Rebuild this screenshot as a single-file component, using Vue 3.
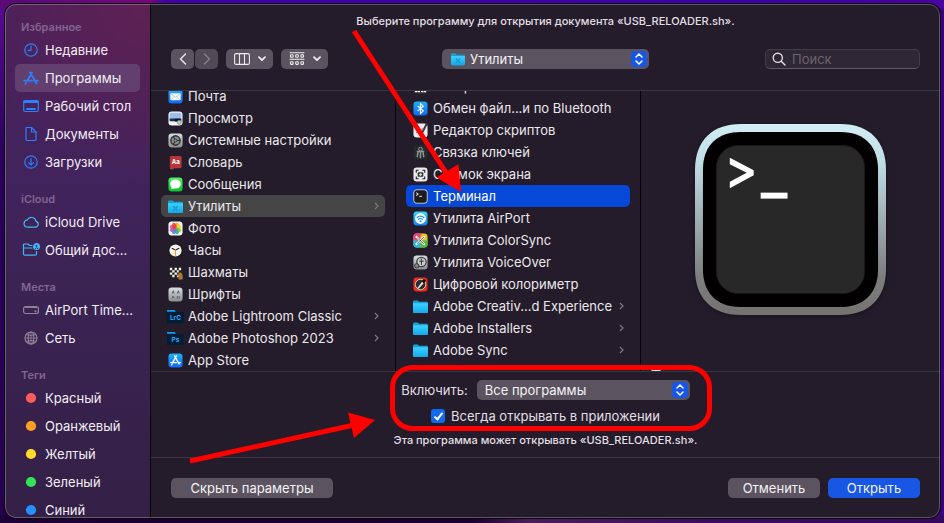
<script setup>
import { ref } from 'vue'

const sections = [
  {
    title: 'Избранное',
    items: [
      { name: 'Недавние', icon: 'clock', tone: 'blue' },
      { name: 'Программы', icon: 'apps', tone: 'blue', active: true },
      { name: 'Рабочий стол', icon: 'desktop', tone: 'blue' },
      { name: 'Документы', icon: 'doc', tone: 'blue' },
      { name: 'Загрузки', icon: 'download', tone: 'blue' },
    ],
  },
  {
    title: 'iCloud',
    items: [
      { name: 'iCloud Drive', icon: 'cloud', tone: 'cyan' },
      { name: 'Общий дос...', icon: 'shared', tone: 'cyan' },
    ],
  },
  {
    title: 'Места',
    items: [
      { name: 'AirPort Time...', icon: 'disk', tone: 'gray' },
      { name: 'Сеть', icon: 'globe', tone: 'gray' },
    ],
  },
  {
    title: 'Теги',
    items: [
      { name: 'Красный', icon: 'dot', tone: 'tag-red' },
      { name: 'Оранжевый', icon: 'dot', tone: 'tag-orange' },
      { name: 'Желтый', icon: 'dot', tone: 'tag-yellow' },
      { name: 'Зеленый', icon: 'dot', tone: 'tag-green' },
      { name: 'Синий', icon: 'dot', tone: 'tag-blue' },
    ],
  },
]

const applications = [
  { name: 'Почта', icon: 'mail' },
  { name: 'Просмотр', icon: 'preview' },
  { name: 'Системные настройки', icon: 'settings' },
  { name: 'Словарь', icon: 'dictionary' },
  { name: 'Сообщения', icon: 'messages' },
  { name: 'Утилиты', icon: 'utilities', folder: true, state: 'open' },
  { name: 'Фото', icon: 'photos' },
  { name: 'Часы', icon: 'clockApp' },
  { name: 'Шахматы', icon: 'chess' },
  { name: 'Шрифты', icon: 'fonts' },
  { name: 'Adobe Lightroom Classic', icon: 'lightroom', folder: true },
  { name: 'Adobe Photoshop 2023', icon: 'photoshop', folder: true },
  { name: 'App Store', icon: 'appStore' },
]

const utilities = [
  { name: 'Настройка Audio-MIDI', icon: 'midi' },
  { name: 'Обмен файл...и по Bluetooth', icon: 'bluetooth' },
  { name: 'Редактор скриптов', icon: 'script' },
  { name: 'Связка ключей', icon: 'keychain' },
  { name: 'Снимок экрана', icon: 'screenshot' },
  { name: 'Терминал', icon: 'terminal', state: 'selected' },
  { name: 'Утилита AirPort', icon: 'airport' },
  { name: 'Утилита ColorSync', icon: 'colorsync' },
  { name: 'Утилита VoiceOver', icon: 'voiceover' },
  { name: 'Цифровой колориметр', icon: 'colorimeter' },
  { name: 'Adobe Creativ...d Experience', icon: 'folder', folder: true },
  { name: 'Adobe Installers', icon: 'folder', folder: true },
  { name: 'Adobe Sync', icon: 'folder', folder: true },
]

const columns = [
  { id: 'applications', label: 'Программы', rows: applications },
  { id: 'utilities', label: 'Утилиты', rows: utilities },
]

const tile = (fill) => `<rect x=".5" y=".5" width="15" height="15" rx="3.500" fill="${fill}"/>`
const folderShape =
  '<path d="M0 3Q0 1.500 1.500 1.500H5L6.500 3H14.500Q16 3 16 4.500V13.500Q16 15 14.500 15H1.500Q0 15 0 13.500Z" fill="#1a9fd0"/><path d="M0 4.500H16V13.500Q16 15 14.500 15H1.500Q0 15 0 13.500Z" fill="url(#g-folder)"/>'
const adobeFolder =
  '<path d="M-1 1H7L8.500 3H-1Z" fill="#0aa0f5"/><path d="M-1 3.500H16.500V15H-1Z" fill="#001d36"/>'
const petals = ['#f7a51c', '#f4d80a', '#8fce3a', '#35b37b', '#4a8fe0', '#9a5fd0', '#d9499a', '#ee3f35']
  .map((c, i) => `<ellipse cx="8" cy="4.900" rx="2.200" ry="3.300" fill="${c}" opacity=".9" transform="rotate(${i * 45 + 22} 8 8)"/>`)
  .join('')

const art = {
  clock: '<circle cx="8" cy="8" r="6.200"/><path d="M8 4V8.300H4.800"/>',
  apps: '<path d="M9 2.500 4 11M7 2.500l6.500 11M1.200 10.700H9M11 10.700h3.800M3 12.800l-.7 1.200" stroke-width="1.700"/>',
  desktop: '<rect x=".7" y="2.500" width="14.600" height="11" rx="1.500"/><path d="M1 4.300H15M1 3.200H15" stroke-width="1.200"/><path d="M4 11H12" stroke-width="1.800"/>',
  doc: '<path d="M3.500 1.500H8.500L13 6V13.200Q13 14.500 11.700 14.500H4.300Q3 14.500 3 13.200V2Z"/><path d="M8.500 1.500V6H13"/>',
  download: '<circle cx="8" cy="8" r="6.200"/><path d="M8 4.700V11M5.500 8.700 8 11.200l2.500-2.500"/>',
  cloud: '<path d="M4 13.200H12.300A3 3 0 0 0 13 7.300A4.600 4.600 0 0 0 4.400 5.900A3.700 3.700 0 0 0 4 13.200Z"/>',
  shared: '<path d="M9 3.500H6.500L5 2H1.500Q.5 2 .5 3V12Q.5 13.200 1.700 13.200H12.300Q13.500 13.200 13.500 12V9.500M.5 6H9"/><circle cx="13.500" cy="4.600" r="2.900" fill="currentColor"/><circle cx="13.500" cy="3.900" r=".9" fill="#40234f" stroke="none"/><path d="M12.200 6.500Q13.500 4.700 14.800 6.500" stroke="#40234f" stroke-width=".9"/>',
  disk: '<rect x=".6" y="4.500" width="14.800" height="7" rx="2"/><path d="M2 5.500H14" /><circle cx="12.500" cy="9.300" r=".5"/>',
  globe: '<circle cx="8" cy="8" r="6"/><ellipse cx="8" cy="8" rx="2.800" ry="6"/><path d="M2 8H14M8 2V14M3.300 4.700Q8 6.500 12.700 4.700M3.300 11.300Q8 9.500 12.700 11.300" stroke-width=".9"/>',
  dot: '<circle cx="8" cy="8" r="5.100" fill="currentColor" stroke="none"/>',

  folder: folderShape,
  utilities: folderShape + '<path d="M5.500 7.500l5 5M10.500 7.500l-5 5" stroke="#1b98cf" stroke-width="1.500"/>',
  mail: tile('url(#g-blue)') + '<rect x="2.500" y="4.500" width="11" height="7.500" rx="1" fill="#f4f8fb"/><path d="M3 5l5 4 5-4M3 11.700l3.500-3.500M13 11.700 9.500 8.200" stroke="#a9bccb" fill="none" stroke-width=".8"/>',
  preview: tile('#f4f4f6') + '<rect x="1.800" y="1.800" width="12.400" height="9" rx="1.500" fill="#9cc0ec"/><path d="M1.800 8H14.200V11H1.800Z" fill="#22314e"/><rect x="7" y="8.200" width="6.500" height="3" rx="1" fill="#111"/><circle cx="12" cy="12" r="2.200" fill="#c3c9d3" stroke="#778" stroke-width=".7"/>',
  settings: tile('url(#g-silver)') + '<circle cx="8" cy="8" r="4.900" fill="#8f9193" stroke="#3a3b3d" stroke-width="1.700"/><path d="M8.500 8H13M8 8 5.700 4M8 8l-2.300 4" stroke="#2b2c2e" stroke-width="1.100"/><circle cx="8" cy="8" r="1.600" fill="#9a9c9e" stroke="#2b2c2e"/>',
  dictionary: '<path d="M2 2.500Q2 1 3.500 1H13Q14.500 1 14.500 2.500V12.500Q14.500 14 13 14H3.500Q2 14 2 12.500Z" fill="#b9353a"/><path d="M2 13Q3 14.500 6 14.200V15.200H3Q2 15 2 13Z" fill="#e0453f"/><text x="8.300" y="9.800" font-size="6.500" font-weight="700" text-anchor="middle" fill="#fff">Aa</text>',
  messages: tile('url(#g-green)') + '<ellipse cx="8" cy="7.500" rx="5.700" ry="4.800" fill="#fff"/><path d="M4 10 3.500 13 7 12Z" fill="#fff"/>',
  photos: tile('#fafafa') + petals,
  clockApp: tile('#1c1c1e') + '<circle cx="8" cy="8" r="6.500" fill="#f6f6f4"/><path d="M8 7.500 4 5.500M8 7.500l4-2" stroke="#222" stroke-width="1.200"/><path d="M8 6.500V13.500" stroke="#f29a1f" stroke-width="1.200"/>',
  chess: tile('#222') + '<path d="M2 3h2.500v2.500H2zM7 3h2.500v2.500H7zM11.500 3H14v2.500h-2.500zM4.500 5.500H7V8H4.500zM9.500 5.500h2V8h-2zM2 8h2.500v2.500H2zM7 8h2.500v2.500H7zM4.500 10.500H7V13H4.500zM9.500 10.500h2V13h-2z" fill="#eee"/><path d="M11 15.500q.8-2 .3-3.500-2 .3-1.500-1 1-3.500 4-3 2.500 1.500 1.700 7.500Z" fill="#ae7633"/>',
  fonts: tile('url(#g-silver)') + '<path d="M4.500 7l1-3 1 3M10 7l1-3 1 3M4.500 12l1-2.500 1 2.500M10 9.500v3M12 9.500v3" stroke="#555d63" fill="none" stroke-width="1"/>',
  lightroom: adobeFolder + '<text x="8" y="11.500" font-size="7" font-weight="700" text-anchor="middle" fill="#31a8ff">LrC</text>',
  photoshop: adobeFolder + '<text x="8" y="11.500" font-size="7" font-weight="700" text-anchor="middle" fill="#31a8ff">Ps</text>',
  appStore: tile('url(#g-blue)') + '<path d="M9 3 4.800 10.500M7 3l4.800 8.700M3 10.300H9M11 10.300h2.200M4.300 12l-.4.700" stroke="#fff" stroke-width="1.400" stroke-linecap="round"/>',

  midi: tile('#333') + '<path d="M2 9h2.500v5H2zM5 9h2.500v5H5zM8.500 9H11v5H8.500zM11.500 9H14v5h-2.500z" fill="#fff"/>',
  bluetooth: tile('url(#g-blue)') + '<path d="M5 5.300l6 5.200-3 2.700V2.800l3 2.700-6 5.200" stroke="#fff" fill="none" stroke-width="1.200"/>',
  script: tile('#ececee') + '<path d="M3 10.500q2-2 3 0t4-5" stroke="#888" fill="none"/><path d="M14.500 1 8 14" stroke="#3b3f46" stroke-width="2.200"/>',
  keychain: tile('#26282a') + '<circle cx="8" cy="4.500" r="2" fill="none" stroke="#9aa"/><path d="M5.500 6.500 4.500 13M8 6v8M10.500 6.500l1 6.500M4 7h8" stroke="#8b9692" stroke-width="1.600"/>',
  screenshot: tile('#ebebed') + '<path d="M3.500 6V3.500H6M10 3.500h2.500V6M12.500 10v2.500H10M6 12.500H3.500V10" stroke="#222" fill="none" stroke-width="1.200"/><rect x="5" y="5.700" width="6" height="4.800" rx="1" fill="#333"/><circle cx="8" cy="8.100" r="1.400" fill="#ddd"/>',
  terminal: '<rect x=".8" y=".8" width="14.400" height="14.400" rx="3.500" fill="#1c1c1c" stroke="#b9c3c8" stroke-width="1.100"/><path d="M3.300 4l2.400 1.500L3.300 7" stroke="#fff" fill="none"/><path d="M6.700 7.800H9.500" stroke="#fff"/>',
  airport: tile('url(#g-cyan)') + '<circle cx="8" cy="8" r="5.800" fill="#f5fbff"/><path d="M4 7.200q4-3.400 8 0M5.500 9q2.500-2 5 0" stroke="#1793ed" fill="none" stroke-width="1.200"/><circle cx="8" cy="10.800" r="1" fill="#1793ed"/>',
  colorsync: tile('#e9c52c') + '<path d="M.5 4Q.5.500 4 .5H8V8H.5Z" fill="#e5409a"/><path d="M.5 8H8V15.500H4Q.5 15.500.5 12Z" fill="#24b6e8"/><path d="M8 15.500V8h7.500v4q0 3.500-3.500 3.500Z" fill="#51b948"/><path d="M8 .5 10 .5 5 8H.5Z" fill="#e6503c" opacity=".7"/><path d="M3 3.500l9.500 9M12.500 3.500 3 12.500" stroke="#fff" stroke-width="2"/><path d="M4.500 5l7 6.500M11.500 4.500 4 11.700" stroke="#333" stroke-width=".8"/>',
  voiceover: tile('url(#g-silver)') + '<circle cx="9" cy="7.500" r="5" fill="#c9cbcd" stroke="#3a3c3e" stroke-width="1.300"/><circle cx="9" cy="5" r=".9" fill="#333"/><path d="M6.500 6.700h5M9 6.700v4" stroke="#333" stroke-width="1.100"/><circle cx="4" cy="11.500" r="2.300" fill="#888" stroke="#333"/>',
  colorimeter: tile('#ee2d1a') + '<circle cx="8" cy="8" r="5.500" fill="#2b2b2b" stroke="#ddd" stroke-width=".9"/><path d="M4 12.500 10 4.500l2 1.500-6 6.500Z" fill="#ddd"/><path d="M9.500 5l2-3 2.500 1.500-2.500 3.500Z" fill="#111"/>',
}

const alwaysOpen = ref(true)
const query = ref('')
</script>

<template>
  <div class="screen">
    <svg class="defs" width="0" height="0" aria-hidden="true">
      <defs>
        <linearGradient id="g-folder" x1="0" y1="0" x2="0" y2="1"><stop offset="0" stop-color="#3fd0ff" /><stop offset="1" stop-color="#12a9ea" /></linearGradient>
        <linearGradient id="g-blue" x1="0" y1="0" x2="0" y2="1"><stop offset="0" stop-color="#1cb0fc" /><stop offset="1" stop-color="#1468ef" /></linearGradient>
        <linearGradient id="g-cyan" x1="0" y1="0" x2="0" y2="1"><stop offset="0" stop-color="#31d8fa" /><stop offset="1" stop-color="#1685ee" /></linearGradient>
        <linearGradient id="g-green" x1="0" y1="0" x2="0" y2="1"><stop offset="0" stop-color="#4ff266" /><stop offset="1" stop-color="#0ac22b" /></linearGradient>
        <linearGradient id="g-silver" x1="0" y1="0" x2="0" y2="1"><stop offset="0" stop-color="#d6e0e4" /><stop offset="1" stop-color="#8b8d8e" /></linearGradient>
        <linearGradient id="g-bezel" x1="0" y1="0" x2="0" y2="1"><stop offset="0" stop-color="#d3edf6" /><stop offset=".2" stop-color="#bfdde6" /><stop offset=".8" stop-color="#7d7e7f" /><stop offset="1" stop-color="#747370" /></linearGradient>
      </defs>
    </svg>

    <div class="dialog" role="dialog" aria-labelledby="dialog-title">
      <nav class="sidebar">
        <section v-for="section in sections" :key="section.title">
          <h2 class="side-title">{{ section.title }}</h2>
          <a
            v-for="item in section.items"
            :key="item.name"
            href="#"
            class="side-item"
            :class="{ active: item.active }"
          >
            <svg class="side-icon" :class="item.tone" viewBox="0 0 16 16" v-html="art[item.icon]" />
            <span>{{ item.name }}</span>
          </a>
        </section>
      </nav>

      <main class="main">
        <header class="header">
          <h1 id="dialog-title" class="small-text">Выберите программу для открытия документа «USB_RELOADER.sh».</h1>
          <div class="toolbar">
            <div class="tools">
              <div class="nav-pair">
                <button class="tool nav" aria-label="Назад">
                  <svg viewBox="0 0 12 14" width="12" height="14"><path d="M8.500 2 3.500 7l5 5" /></svg>
                </button>
                <button class="tool nav dim" aria-label="Вперед" disabled>
                  <svg viewBox="0 0 12 14" width="12" height="14"><path d="M3.500 2l5 5-5 5" /></svg>
                </button>
              </div>
              <button class="tool view" aria-label="Вид">
                <svg class="thin" viewBox="0 0 16 14" width="16" height="14"><rect x=".6" y="1.600" width="14.800" height="10.800" rx="1.500" /><path d="M5.500 2V12M10.500 2V12" /></svg>
                <svg class="bold" viewBox="0 0 8 6" width="8" height="6"><path d="M1 1.200l3 3 3-3" /></svg>
              </button>
              <button class="tool view" aria-label="Группировка">
                <svg class="thin" viewBox="0 0 16 14" width="16" height="14"><path d="M1 .7H15M1 7.300H15" /><rect x="1.500" y="2.700" width="2.600" height="2.600" rx=".6" /><rect x="6.700" y="2.700" width="2.600" height="2.600" rx=".6" /><rect x="11.900" y="2.700" width="2.600" height="2.600" rx=".6" /><rect x="1.500" y="9.800" width="2.600" height="2.600" rx=".6" /><rect x="6.700" y="9.800" width="2.600" height="2.600" rx=".6" /><rect x="11.900" y="9.800" width="2.600" height="2.600" rx=".6" /></svg>
                <svg class="bold" viewBox="0 0 8 6" width="8" height="6"><path d="M1 1.200l3 3 3-3" /></svg>
              </button>
            </div>

            <div class="popup location">
              <svg class="popup-icon" viewBox="0 0 16 16" v-html="art.utilities" />
              <select aria-label="Папка"><option>Утилиты</option></select>
              <span class="stepper"><svg viewBox="0 0 10 14" width="10" height="14"><path d="M2 5l3-3 3 3M2 9l3 3 3-3" /></svg></span>
            </div>

            <label class="search">
              <svg viewBox="0 0 14 14" width="14" height="14"><circle cx="5.800" cy="5.800" r="4.600" /><path d="M9.200 9.200 13 13" /></svg>
              <input v-model="query" type="text" placeholder="Поиск" aria-label="Поиск" />
            </label>
          </div>
        </header>

        <div class="browser">
          <ul v-for="column in columns" :key="column.id" class="column" :class="column.id" :aria-label="column.label">
            <li v-for="row in column.rows" :key="row.name" class="row" :class="row.state">
              <svg class="row-icon" viewBox="0 0 16 16" v-html="art[row.icon]" />
              <span class="row-name">{{ row.name }}</span>
              <svg v-if="row.folder" class="row-chevron" viewBox="0 0 5 8" width="5" height="8"><path d="M1 1l3 3-3 3" /></svg>
            </li>
          </ul>
          <div class="preview">
            <svg class="preview-art" viewBox="0 0 192 192" role="img" aria-label="Терминал">
              <path d="M46 0H146C176 0 192 18 192 46V146C192 176 174 192 146 192H46C16 192 0 174 0 146V46C0 16 18 0 46 0Z" fill="url(#g-bezel)" />
              <path d="M46 8H146C172 8 184 24 184 46V146C184 172 168 184 146 184H46C20 184 8 168 8 146V46C8 20 24 8 46 8Z" fill="#020001" />
              <rect x="21.500" y="21.500" width="149" height="149" rx="22" fill="#282828" stroke="#191818" />
              <path d="M35 34 59 46.500V51.500L35 64.500V58L52 49 35 40.500Z" fill="#fff" />
              <rect x="66" y="69" width="27" height="6" fill="#fff" />
            </svg>
            <h2 class="preview-title">Терминал</h2>
          </div>
        </div>

        <div class="options">
          <div class="enable">
            <label for="enable-filter">Включить:</label>
            <div class="popup filter">
              <select id="enable-filter"><option>Все программы</option></select>
              <span class="stepper"><svg viewBox="0 0 10 14" width="10" height="14"><path d="M2 5l3-3 3 3M2 9l3 3 3-3" /></svg></span>
            </div>
          </div>
          <label class="always">
            <input v-model="alwaysOpen" type="checkbox" />
            <span>Всегда открывать в приложении</span>
          </label>
          <p class="small-text">Эта программа может открывать «USB_RELOADER.sh».</p>
        </div>

        <footer class="footer">
          <button class="button wide">Скрыть параметры</button>
          <button class="button push">Отменить</button>
          <button class="button primary">Открыть</button>
        </footer>
      </main>
    </div>

    <svg class="marks" width="944" height="523" viewBox="0 0 944 523" aria-hidden="true">
      <rect x="392.500" y="367.500" width="317" height="61" rx="20" fill="none" stroke="#f00" stroke-width="5" />
      <path d="M354 31 449 177M190 461 354 425" stroke="#f00" stroke-width="5" />
      <path d="M461 192 436.500 177.500 458.500 164Z M375 420 348 412.500 354 438Z" fill="#f00" />
    </svg>
  </div>
</template>

<style>
body {
  margin: 0;
  background: #26004f;
}
</style>

<style scoped>
.screen {
  position: relative;
  box-sizing: border-box;
  height: 100vh;
  padding: 4px 4px 5px 5px;
  overflow: hidden;
  background:
    linear-gradient(100deg, #5b0a78 0, #74067a 150px, #4300a8 162px, #3c00a6 80%, #4a00a0 100%) top / 100% 8px no-repeat,
    linear-gradient(90deg, #1d0037 0, #1b0031 50%, #4a1c5d 56%, #3b0a5e 75%, #36075f 100%) bottom / 100% 8px no-repeat,
    linear-gradient(90deg, transparent 50%, #3a0086 50%),
    linear-gradient(180deg, #5b0a94 0, #2a005c 30%, #26004f 100%);
  color: #e2dfe4;
  font: 400 13px/16px Inter, "Liberation Sans", sans-serif;
}

.defs {
  position: absolute;
}

.dialog {
  position: relative;
  display: flex;
  height: 100%;
  border-radius: 11px;
  overflow: hidden;
  background: #241c2a;
  box-shadow: 0 0 0 1px #08040c;
}

.dialog::after {
  content: "";
  position: absolute;
  inset: 0;
  border: 1px solid rgba(255, 255, 255, 0.26);
  border-radius: 11px;
  pointer-events: none;
}

.sidebar {
  box-sizing: border-box;
  flex: 0 0 146px;
  padding: 0 10px;
  overflow: hidden;
  border-right: 1px solid #060308;
  background:
    radial-gradient(circle at 100% 0, rgba(108, 32, 76, 0.6), transparent 180px),
    linear-gradient(180deg, #4a215c 0, #41235c 35%, #3a2352 60%, #342046 100%);
}

.side-title {
  margin: 0;
  padding: 14px 6px 0;
  font-size: 11px;
  line-height: 18px;
  font-weight: 600;
  color: #836492;
}

.side-item {
  display: flex;
  align-items: center;
  gap: 6px;
  height: 28px;
  padding: 0 8px;
  border-radius: 5px;
  color: #f2eef4;
  text-decoration: none;
  white-space: nowrap;
}

.side-item.active {
  background: #633f6f;
}

.side-icon {
  flex: none;
  width: 16px;
  height: 16px;
  overflow: visible;
  fill: none;
  stroke: currentColor;
  stroke-width: 1.2;
  stroke-linecap: round;
  stroke-linejoin: round;
}

.blue { color: #2b80fb; }
.cyan { color: #3fb9f4; }
.gray { color: #8f8195; }
.tag-red { color: #ff5b5b; }
.tag-orange { color: #ff9e26; }
.tag-yellow { color: #ffdb2b; }
.tag-green { color: #32e455; }
.tag-blue { color: #2591ff; }

.main {
  flex: 1;
  display: flex;
  flex-direction: column;
  min-width: 0;
}

.header {
  padding: 9px 20px 21px;
  border-bottom: 1px solid #3c3542;
}

.small-text {
  margin: 0;
  font-size: 11px;
  line-height: 16px;
  font-weight: 500;
  text-align: center;
}

.toolbar {
  display: grid;
  grid-template-columns: 1fr 207px 1fr;
  align-items: center;
  margin-top: 20px;
}

.tools {
  display: flex;
  gap: 8px;
}

.nav-pair {
  display: flex;
  gap: 1px;
}

.tool {
  display: flex;
  align-items: center;
  justify-content: center;
  height: 20px;
  padding: 0;
  border: 0;
  border-radius: 5px;
  background: #5b5460;
  color: #eeecef;
}

.tool svg {
  fill: none;
  stroke: currentColor;
  stroke-width: 1.4;
  stroke-linecap: round;
  stroke-linejoin: round;
}

.tool .thin { stroke-width: 1.1; }
.tool .bold { stroke-width: 1.8; }

.nav { width: 23px; }

.dim {
  background: #524b57;
  color: #85808a;
}

.view {
  gap: 8px;
  width: 47px;
}

.popup {
  position: relative;
  display: flex;
  align-items: center;
  height: 20px;
  border-radius: 5px;
  background: #5b5460;
}

.popup select {
  appearance: none;
  width: 100%;
  height: 20px;
  margin: 0;
  padding: 0 24px 0 8px;
  border: 0;
  background: transparent;
  color: #f4f2f5;
  font: inherit;
}

.popup.location select {
  padding-left: 28px;
}

.popup-icon {
  position: absolute;
  left: 9px;
  width: 14px;
  height: 14px;
  pointer-events: none;
}

.stepper {
  position: absolute;
  right: 2px;
  display: flex;
  align-items: center;
  justify-content: center;
  width: 16px;
  height: 16px;
  border-radius: 4px;
  background: #1857e4;
  pointer-events: none;
}

.stepper svg {
  fill: none;
  stroke: #fff;
  stroke-width: 1.5;
  stroke-linecap: round;
  stroke-linejoin: round;
}

.search {
  box-sizing: border-box;
  justify-self: end;
  display: flex;
  align-items: center;
  gap: 6px;
  width: 155px;
  height: 20px;
  padding: 0 6px;
  border: 1px solid #433b49;
  border-bottom-color: #5d5663;
  border-radius: 5px;
  background: #2f2735;
}

.search svg {
  flex: none;
  fill: none;
  stroke: #e0dee2;
  stroke-width: 1.4;
  stroke-linecap: round;
}

.search input {
  min-width: 0;
  width: 100%;
  padding: 0;
  border: 0;
  outline: 0;
  background: transparent;
  color: #e2dfe4;
  font: inherit;
}

.search input::placeholder {
  color: #6b6470;
  opacity: 1;
}

.browser {
  flex: 1;
  display: grid;
  grid-template-columns: 245px 245px 1fr;
  grid-template-rows: 100%;
  min-height: 0;
  overflow: hidden;
  border-bottom: 1px solid #3c3542;
}

.column {
  display: flex;
  flex-direction: column;
  justify-content: flex-end;
  min-height: 0;
  margin: 0;
  padding: 0 10px;
  overflow: hidden;
  border-right: 1px solid #060308;
  list-style: none;
}

.column.utilities {
  padding-bottom: 10px;
}

.row {
  flex: none;
  display: flex;
  align-items: center;
  gap: 5px;
  height: 22px;
  padding: 0 6px 0 7px;
  border-radius: 5px;
  color: #ebe8ec;
}

.row.open { background: #464546; }

.row.selected {
  background: #0648d8;
  color: #fff;
}

.row-icon {
  flex: none;
  width: 15px;
  height: 15px;
  overflow: visible;
}

.row-name {
  flex: 1;
  white-space: nowrap;
}

.row-chevron {
  flex: none;
  fill: none;
  stroke: #7d7882;
  stroke-width: 1.2;
}

.preview {
  min-width: 0;
  padding: 33px 10px 0;
  overflow: hidden;
}

.preview-art {
  display: block;
  width: 191px;
  height: 191px;
  margin: 0 auto;
  filter: drop-shadow(0 1px 2px rgba(0, 0, 0, 0.4));
}

.preview-title {
  margin: 50px 0 0;
  font-size: 15px;
  line-height: 20px;
  font-weight: 700;
  color: #fff;
}

.options {
  display: flex;
  flex-direction: column;
  align-items: center;
  gap: 8px;
  padding: 8px 20px 9px;
  border-bottom: 1px solid #3c3542;
}

.enable {
  display: flex;
  align-items: center;
  gap: 9px;
}

.filter { width: 213px; }

.always {
  display: flex;
  align-items: center;
  gap: 6px;
}

.always input {
  appearance: none;
  width: 14px;
  height: 14px;
  margin: 0;
  border-radius: 3px;
  background: #5b5460;
}

.always input:checked {
  background: #1169f0;
}

.always input:checked::after {
  content: "";
  display: block;
  width: 3px;
  height: 7px;
  margin: 2px 0 0 5px;
  border: solid #fff;
  border-width: 0 2px 2px 0;
  transform: rotate(38deg);
}

.footer {
  display: flex;
  gap: 8px;
  padding: 20px;
}

.button {
  width: 92px;
  height: 20px;
  padding: 0;
  border: 0;
  border-radius: 5px;
  background: #5b5460;
  color: #f4f2f5;
  font: inherit;
}

.wide { width: 162px; }
.push { margin-left: auto; }
.primary { background: #1857e4; }

.marks {
  position: absolute;
  top: 0;
  left: 0;
  pointer-events: none;
}
</style>
